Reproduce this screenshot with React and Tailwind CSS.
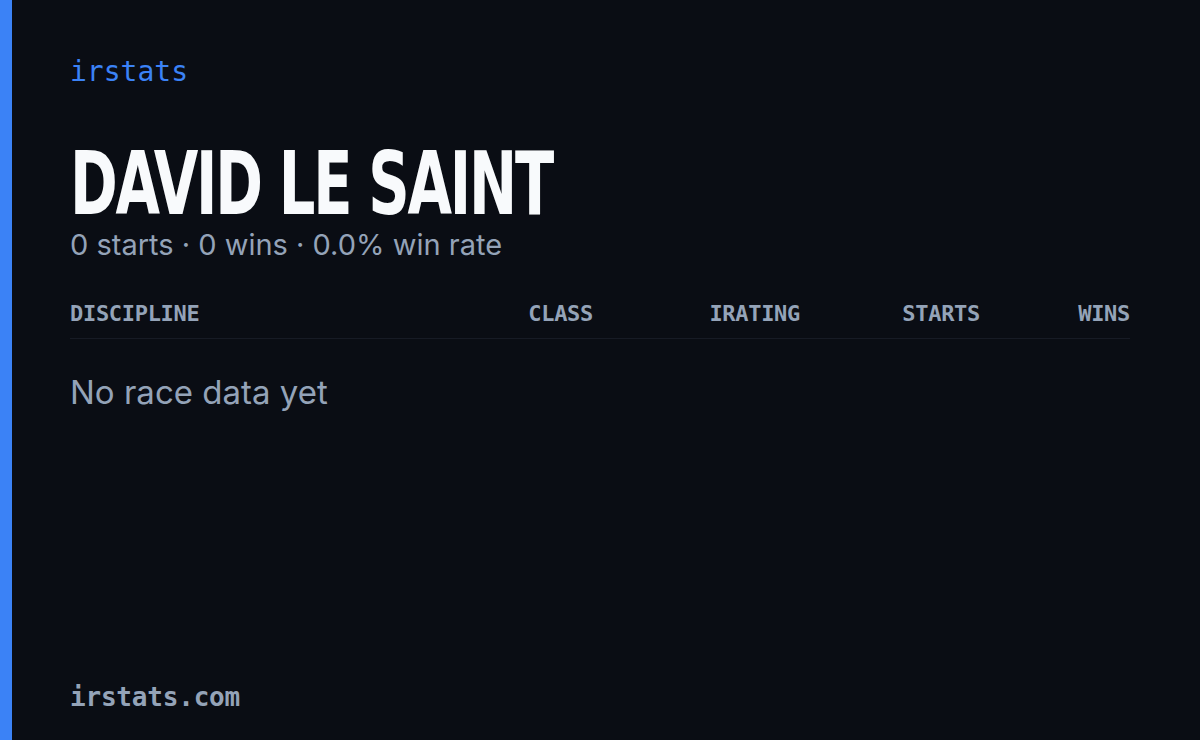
import React from 'react';

const cols = [
    { key: 'discipline', label: 'DISCIPLINE', cls: 'flex-1 text-left' },
    { key: 'class', label: 'CLASS', cls: 'w-[160px] text-right' },
    { key: 'irating', label: 'IRATING', cls: 'w-[207px] text-right' },
    { key: 'starts', label: 'STARTS', cls: 'w-[180px] text-right' },
    { key: 'wins', label: 'WINS', cls: 'w-[150px] text-right' },
];

export default function App() {
    const driver = { name: 'DAVID LE SAINT', starts: 0, wins: 0 };
    const rate = driver.starts ? (driver.wins / driver.starts) * 100 : 0;

    return (
        <div className="w-[1200px] h-[740px] flex bg-[#0a0d14] overflow-hidden">
            {/* accent bar */}
            <div className="w-[12px] shrink-0 bg-[#3b82f6]" />

            <div className="flex-1 flex flex-col pl-[58px] pr-[70px] pt-[52px] pb-[26px]">
                <div className="font-['DejaVu_Sans_Mono',monospace] text-[28px] leading-[40px] tracking-[0px] text-[#3b82f6] font-medium">
                    irstats
                </div>

                <h1 className="mt-[48px] font-['DejaVu_Sans_Condensed',sans-serif] font-bold text-[88px] leading-[88px] text-[#f8fafc] tracking-[-3px] origin-left scale-x-[0.727] whitespace-nowrap">
                    {driver.name}
                </h1>

                <div className="mt-[2px] font-['Inter',sans-serif] text-[29px] leading-[30px] text-[#94a3b8]">
                    {driver.starts} starts · {driver.wins} wins · {rate.toFixed(1)}% win rate
                </div>

                {/* table */}
                <div className="mt-[42px] flex items-center pb-[12px] border-b border-[#171b25] font-['DejaVu_Sans_Mono',monospace] text-[22px] leading-[24px] tracking-[-0.3px] font-bold text-[#94a3b8]">
                    {cols.map(c => (
                        <div key={c.key} className={c.cls}>{c.label}</div>
                    ))}
                </div>

                <div className="mt-[33px] font-['Inter',sans-serif] text-[33px] leading-[40px] text-[#94a3b8]">
                    No race data yet
                </div>

                <div className="mt-auto font-['DejaVu_Sans_Mono',monospace] text-[26px] leading-[34px] tracking-[-0.2px] font-bold text-[#94a3b8]">
                    irstats.com
                </div>
            </div>
        </div>
    );
}
